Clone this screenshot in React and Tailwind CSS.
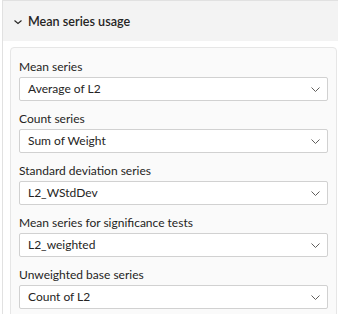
import React from "react";

const font = { fontFamily: 'Lato, "Noto Sans", sans-serif' };

function Chevron({ className }) {
  return (
    <svg width="9" height="5" viewBox="0 0 9 5" className={className}>
      <path d="M0.5 0.5 L4.5 4.5 L8.5 0.5" fill="none" stroke="currentColor" strokeWidth="1" />
    </svg>
  );
}

const rows = [
  ["Mean series", "Average of L2"],
  ["Count series", "Sum of Weight"],
  ["Standard deviation series", "L2_WStdDev"],
  ["Mean series for significance tests", "L2_weighted"],
  ["Unweighted base series", "Count of L2"],
];

export default function App() {
  return (
    <div className="w-[338px] h-[314px] bg-white overflow-hidden pl-[2px]" style={font}>
      <div className="border-t border-l border-[#e1e1e1] h-full">
        <div className="h-[40px] bg-[#f3f3f3] flex items-center pl-[11px]">
          <svg width="8" height="6" viewBox="0 0 8 6" className="text-[#252423] mt-[1px]">
            <path d="M0.5 1.5 L4 4.5 L7.5 1.5" fill="none" stroke="currentColor" strokeWidth="1.1" />
          </svg>
          <span className="ml-[6px] text-[12.6px] font-semibold text-[#252423] leading-[20px] mt-[2px]">Mean series usage</span>
        </div>
        <div className="pl-[7px] pt-[6px]">
          <div className="border border-[#e6e6e6] rounded-[4px] bg-[#fafafa] w-[327px] h-[300px] px-[8px] pt-[1px]">
            {rows.map(([label, value]) => (
              <div key={label} className="pt-[7px]">
                <div className="h-[20px] leading-[20px] text-[12px] text-[#252423] mb-[1px] pt-[1px]">{label}</div>
                <div className="h-[24px] bg-white border border-[#d1d1d1] rounded-[2px] flex items-center justify-between pl-[8px] pr-[7px]">
                  <span className="text-[12px] text-[#252423] leading-[20px]">{value}</span>
                  <Chevron className="text-[#605e5c]" />
                </div>
              </div>
            ))}
          </div>
        </div>
      </div>
    </div>
  );
}
